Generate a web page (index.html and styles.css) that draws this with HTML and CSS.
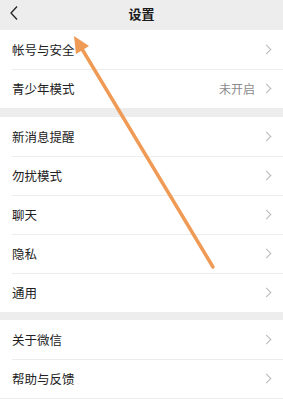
FILE: index.html
```html
<!DOCTYPE html>
<html lang="zh">
<head>
<meta charset="utf-8">
<link rel="stylesheet" href="styles.css">
</head>
<body>
<div class="page">
  <header class="topbar">
    <svg class="back" width="10" height="16" viewBox="0 0 10 16"><path d="M8 1.5 L2 8 L8 14.5" fill="none" stroke="#222" stroke-width="1.3"/></svg>
    <div class="title">设置</div>
  </header>
  <section class="group">
    <div class="row"><span class="label">帐号与安全</span><span class="chev"></span></div>
    <div class="row"><span class="label">青少年模式</span><span class="value">未开启</span><span class="chev"></span></div>
  </section>
  <section class="group">
    <div class="row"><span class="label">新消息提醒</span><span class="chev"></span></div>
    <div class="row"><span class="label">勿扰模式</span><span class="chev"></span></div>
    <div class="row"><span class="label">聊天</span><span class="chev"></span></div>
    <div class="row"><span class="label">隐私</span><span class="chev"></span></div>
    <div class="row"><span class="label">通用</span><span class="chev"></span></div>
  </section>
  <section class="group g3">
    <div class="row"><span class="label">关于微信</span><span class="chev"></span></div>
    <div class="row"><span class="label">帮助与反馈</span><span class="chev"></span></div>
  </section>
  <svg class="arrow" width="283" height="399" viewBox="0 0 283 399">
    <line x1="213" y1="267" x2="79" y2="44" stroke="#ef9a55" stroke-width="3.4" stroke-linecap="round"/>
    <polygon points="74,36 89,46 76,54" fill="#ef9a55"/>
  </svg>
</div>
</body>
</html>
```
FILE: styles.css
```css
html, body {
  margin: 0;
  padding: 0;
  background: #ededed;
}
.page {
  position: relative;
  width: 283px;
  height: 399px;
  overflow: hidden;
  font-family: "Noto Sans CJK SC", "Noto Sans", sans-serif;
  color: #222;
}
.topbar {
  height: 30px;
  display: flex;
  align-items: center;
  justify-content: center;
  position: relative;
  background: #ededed;
}
.back {
  position: absolute;
  left: 9px;
  top: 5px;
}
.title {
  font-size: 13px;
  font-weight: 700;
  color: #1a1a1a;
  margin-top: -3px;
}
.group {
  background: #fff;
  margin-bottom: 9px;
}
.group.g3 {
  margin-top: -1px;
}
.row {
  height: 39px;
  display: flex;
  align-items: center;
  padding: 0 12px 0 12px;
  box-sizing: border-box;
  position: relative;
}
.row + .row::before {
  content: "";
  position: absolute;
  left: 12px;
  right: 0;
  top: 0;
  height: 1px;
  background: #ececec;
}
.label {
  flex: 1;
  font-size: 12.5px;
  font-weight: 400;
}
.value {
  font-size: 12px;
  color: #8a8a8a;
  margin-right: 8px;
}
.chev {
  width: 6px;
  height: 6px;
  border-top: 1.3px solid #b8b8b8;
  border-right: 1.3px solid #b8b8b8;
  transform: rotate(45deg);
  margin-right: 1px;
}
.arrow {
  position: absolute;
  left: 0;
  top: 0;
  pointer-events: none;
}
```
